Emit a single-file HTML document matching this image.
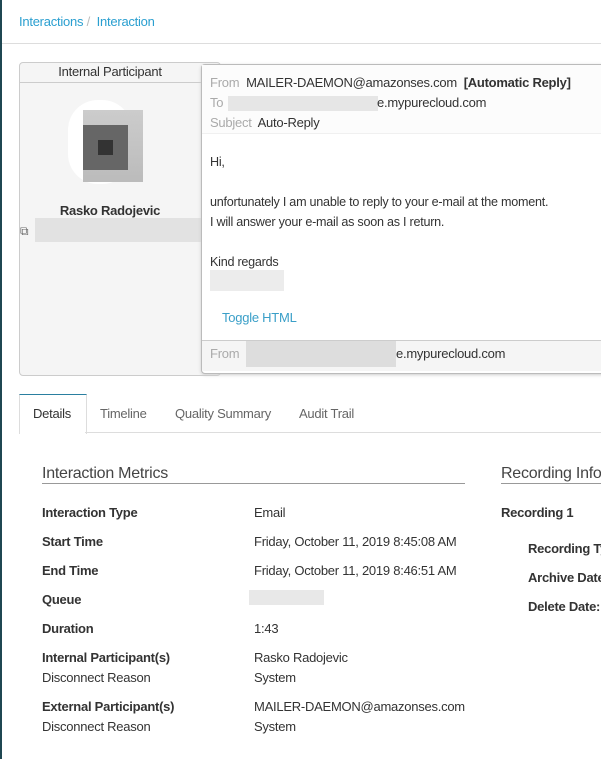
<!DOCTYPE html>
<html><head><style>
body{margin:0;width:601px;height:759px;overflow:hidden;background:#fff;font-family:"Liberation Sans",sans-serif;color:#333;position:relative}
.a{position:absolute;white-space:nowrap;letter-spacing:-0.25px}
.lbl{color:#aaa}
.blur{position:absolute;background:#e6e6e6}
.b{font-weight:bold}
</style></head><body>
<div class="a" style="left:0;top:0;width:2px;height:759px;background:#1f4752"></div>
<div class="a" style="left:19px;top:14px;font-size:13px;color:#2a9fd0">Interactions <span style="color:#bbb">/</span>&nbsp; Interaction</div>
<div class="a" style="left:2px;top:43px;width:599px;height:1px;background:#ddd"></div>

<div class="a" style="left:19px;top:62px;width:200px;height:312px;border:1px solid #ccc;border-radius:4px;background:#f5f5f5"></div>
<div class="a" style="left:19px;top:64px;width:182px;text-align:center;font-size:13px;color:#333;">Internal Participant</div>
<div class="a" style="left:20px;top:82px;width:182px;height:1px;background:#ccc"></div>
<div class="a" style="left:68px;top:100px;width:64px;height:84px;background:#fff;border-radius:30px"></div>
<div class="a" style="left:83px;top:110px;width:60px;height:72px;background:linear-gradient(#ccc,#bbb)"></div>
<div class="a" style="left:83px;top:125px;width:45px;height:45px;background:#666"></div>
<div class="a" style="left:98px;top:140px;width:15px;height:15px;background:#333"></div>
<div class="a" style="left:19px;top:203px;width:182px;text-align:center;font-size:13px;font-weight:bold;color:#333">Rasko Radojevic</div>
<div class="a" style="left:20px;top:224px;font-size:12px;color:#666">⧉</div>
<div class="blur" style="left:35px;top:218px;width:168px;height:24px;background:#e2e2e2"></div>

<div class="a" style="left:201px;top:64px;width:402px;height:308px;border:1px solid #bbb;border-radius:4px;background:#fff;box-shadow:0 1px 3px #ccc"></div>
<div class="a" style="left:202px;top:65px;width:399px;height:68px;background:#fcfcfc;border-bottom:1px solid #f0f0f0"></div>
<div class="a" style="left:210px;top:75px;font-size:13px"><span class="lbl">From</span>&nbsp; MAILER-DAEMON@amazonses.com&nbsp; <b>[Automatic Reply]</b></div>
<div class="a" style="left:210px;top:95px;font-size:13px"><span class="lbl">To</span></div>
<div class="blur" style="left:228px;top:96px;width:150px;height:15px"></div>
<div class="a" style="left:377px;top:95px;font-size:13px">e.mypurecloud.com</div>
<div class="a" style="left:210px;top:115px;font-size:13px"><span class="lbl">Subject</span>&nbsp; Auto-Reply</div>
<div class="a" style="left:210px;top:152px;font-size:12.6px;line-height:20px">Hi,<br><br>unfortunately I am unable to reply to your e-mail at the moment.<br>I will answer your e-mail as soon as I return.<br><br>Kind regards</div>
<div class="blur" style="left:210px;top:270px;width:74px;height:21px;background:#ececec"></div>
<div class="a" style="left:222px;top:310px;font-size:13px;color:#3a9fc8">Toggle HTML</div>
<div class="a" style="left:202px;top:340px;width:399px;height:30px;background:#f5f5f5;border-top:1px solid #ccc"></div>
<div class="a" style="left:210px;top:346px;font-size:13px"><span class="lbl">From</span></div>
<div class="blur" style="left:246px;top:341px;width:150px;height:26px;background:#ddd"></div>
<div class="a" style="left:396px;top:346px;font-size:13px">e.mypurecloud.com</div>

<div class="a" style="left:19px;top:394px;width:66px;height:39px;border:1px solid #ddd;border-top:1px solid #2a7fa0;border-bottom:none;background:#fff"></div>
<div class="a" style="left:85px;top:432px;width:516px;height:1px;background:#ddd"></div>
<div class="a" style="left:33px;top:406px;font-size:13px">Details</div>
<div class="a" style="left:100px;top:406px;font-size:13px;color:#666">Timeline</div>
<div class="a" style="left:175px;top:406px;font-size:13px;color:#666">Quality Summary</div>
<div class="a" style="left:299px;top:406px;font-size:13px;color:#666">Audit Trail</div>

<div class="a" style="left:42px;top:465px;font-size:16px;color:#444">Interaction Metrics</div>
<div class="a" style="left:42px;top:483px;width:423px;height:1px;background:#999"></div>
<div class="a" style="left:501px;top:465px;font-size:16px;color:#444">Recording Info</div>
<div class="a" style="left:501px;top:483px;width:100px;height:1px;background:#999"></div>

<div class="a b" style="left:42px;top:505px;font-size:13px">Interaction Type</div><div class="a" style="left:254px;top:505px;font-size:13px">Email</div>
<div class="a b" style="left:42px;top:534px;font-size:13px">Start Time</div><div class="a" style="left:254px;top:534px;font-size:13px">Friday, October 11, 2019 8:45:08 AM</div>
<div class="a b" style="left:42px;top:563px;font-size:13px">End Time</div><div class="a" style="left:254px;top:563px;font-size:13px">Friday, October 11, 2019 8:46:51 AM</div>
<div class="a b" style="left:42px;top:592px;font-size:13px">Queue</div><div class="blur" style="left:249px;top:590px;width:75px;height:15px;background:#e8e8e8"></div>
<div class="a b" style="left:42px;top:621px;font-size:13px">Duration</div><div class="a" style="left:254px;top:621px;font-size:13px">1:43</div>
<div class="a b" style="left:42px;top:650px;font-size:13px">Internal Participant(s)</div><div class="a" style="left:254px;top:650px;font-size:13px">Rasko Radojevic</div>
<div class="a" style="left:42px;top:670px;font-size:13px">Disconnect Reason</div><div class="a" style="left:254px;top:670px;font-size:13px">System</div>
<div class="a b" style="left:42px;top:699px;font-size:13px">External Participant(s)</div><div class="a" style="left:254px;top:699px;font-size:13px">MAILER-DAEMON@amazonses.com</div>
<div class="a" style="left:42px;top:719px;font-size:13px">Disconnect Reason</div><div class="a" style="left:254px;top:719px;font-size:13px">System</div>

<div class="a b" style="left:501px;top:505px;font-size:13px">Recording 1</div>
<div class="a b" style="left:528px;top:541px;font-size:13px">Recording Type</div>
<div class="a b" style="left:528px;top:570px;font-size:13px">Archive Date</div>
<div class="a b" style="left:528px;top:599px;font-size:13px">Delete Date:</div>
</body></html>
